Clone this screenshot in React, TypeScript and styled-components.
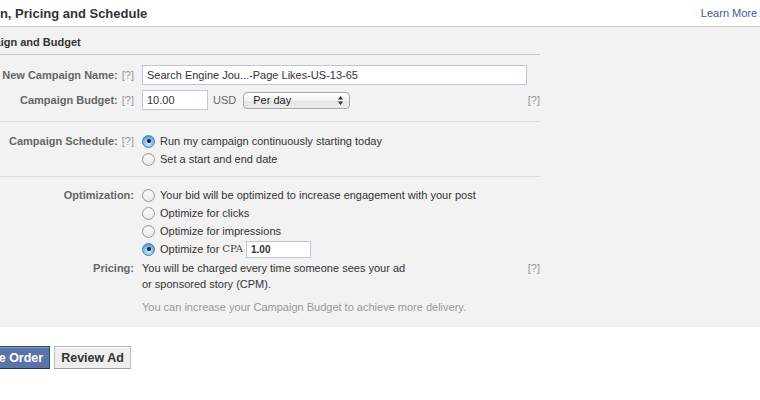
import React from "react";
import styled, { createGlobalStyle } from "styled-components";

const GlobalStyle = createGlobalStyle`
  html, body {
    margin: 0;
    padding: 0;
    background: #fff;
    overflow: hidden;
  }
  body {
    font-family: "Liberation Sans", Arial, sans-serif;
    font-size: 11px;
    color: #333;
  }
`;

const Viewport = styled.div`
  width: 760px;
  height: 400px;
  overflow: hidden;
`;

const Canvas = styled.div`
  margin-left: -55px;
  width: 880px;
`;

const Header = styled.div`
  display: flex;
  justify-content: space-between;
  align-items: center;
  height: 26px;
  border-bottom: 1px solid #ccc;
`;

const Title = styled.h2`
  margin: 0;
  font-size: 13px;
  font-weight: bold;
  color: #333;
`;

const HelpLink = styled.a`
  color: #3b5998;
  font-size: 11px;
  text-decoration: none;
  cursor: pointer;
`;

const Panel = styled.div`
  background: #f2f2f2;
  padding: 0 0 12px 19px;
`;

const Form = styled.div`
  width: 576px;
`;

const SectionTitle = styled.div`
  font-weight: bold;
  color: #333;
  line-height: 14px;
  padding: 8px 0 5px;
  border-bottom: 1px solid #ccc;
`;

const Section = styled.div<{ $pad: string; $last?: boolean }>`
  padding: ${(p) => p.$pad};
  border-bottom: ${(p) => (p.$last ? "none" : "1px solid #ddd")};
  display: flex;
  flex-direction: column;
  gap: 5px;
`;

const Row = styled.div<{ $line?: number; $top?: number }>`
  display: grid;
  grid-template-columns: 170px 1fr;
  column-gap: 8px;
  align-items: start;
  line-height: ${(p) => p.$line ?? 20}px;
  margin-top: ${(p) => p.$top ?? 0}px;
`;

const Label = styled.div`
  text-align: right;
  font-weight: bold;
  color: #666;
  white-space: nowrap;
`;

const Help = styled.span`
  color: #999;
  font-weight: normal;
  margin-left: 4px;
`;

const Field = styled.div`
  display: flex;
  align-items: center;
`;

const TextInput = styled.input<{ $width: number; $height?: number; $small?: boolean }>`
  box-sizing: border-box;
  width: ${(p) => p.$width}px;
  height: ${(p) => p.$height ?? 20}px;
  border: 1px solid #bdc7d8;
  background: #fff;
  padding: 0 4px;
  margin: 0;
  font-family: "Liberation Sans", Arial, sans-serif;
  font-size: ${(p) => (p.$small ? 10 : 11)}px;
  font-weight: ${(p) => (p.$small ? "bold" : "normal")};
  color: #333;
  outline: none;
`;

const Currency = styled.span`
  color: #666;
  margin: 0 7px 0 5px;
`;

const PopUp = styled.div`
  box-sizing: border-box;
  display: flex;
  align-items: center;
  justify-content: space-between;
  width: 107px;
  height: 17px;
  padding: 0 6px 0 9px;
  border: 1px solid #a5a5a5;
  border-radius: 4px;
  background: linear-gradient(#ffffff, #f1f1f1 50%, #e4e4e4 51%, #ececec);
  box-shadow: 0 1px 0 rgba(255, 255, 255, 0.7);
  line-height: 15px;
  color: #222;
`;

const RightHelp = styled.span`
  margin-left: auto;
  color: #999;
  align-self: flex-start;
`;

const RadioList = styled.div`
  display: flex;
  flex-direction: column;
`;

const Option = styled.label`
  display: flex;
  align-items: center;
  height: 18px;
  color: #333;
  white-space: nowrap;
`;

const RadioDot = styled.span<{ $checked?: boolean }>`
  box-sizing: border-box;
  position: relative;
  flex: none;
  width: 13px;
  height: 13px;
  margin-right: 5px;
  border-radius: 50%;
  border: 1px solid ${(p) => (p.$checked ? "#4f7db6" : "#9b9b9b")};
  background: ${(p) =>
    p.$checked
      ? "radial-gradient(circle at 50% 70%, #cbe6fb, #7fb8ea 55%, #4a8fd6)"
      : "linear-gradient(#fdfdfd, #e9e9e9)"};
  box-shadow: inset 0 1px 1px rgba(0, 0, 0, 0.08);

  &::after {
    content: "";
    display: ${(p) => (p.$checked ? "block" : "none")};
    position: absolute;
    left: 50%;
    top: 50%;
    width: 4px;
    height: 4px;
    margin: -2px 0 0 -2px;
    border-radius: 50%;
    background: #1b1b1b;
  }
`;

const Acronym = styled.span`
  font-family: "DejaVu Serif", "Liberation Serif", serif;
  font-size: 10px;
  color: #444;
  margin: 0 3px 0 3px;
`;

const PriceText = styled.div`
  color: #333;
  line-height: 16px;
`;

const Note = styled.div`
  color: #999;
  line-height: 16px;
`;

const ButtonBar = styled.div`
  display: flex;
  gap: 4px;
  margin: 19px 0 0 21px;
`;

const Button = styled.button<{ $primary?: boolean }>`
  box-sizing: border-box;
  height: 23px;
  padding: 0 6px;
  font-family: "Liberation Sans", Arial, sans-serif;
  font-size: 12.5px;
  font-weight: bold;
  cursor: pointer;
  color: ${(p) => (p.$primary ? "#fff" : "#333")};
  background: ${(p) => (p.$primary ? "#5b74a8" : "#eee")};
  border-width: 1px;
  border-style: solid;
  border-color: ${(p) => (p.$primary ? "#29447e #29447e #1a356e" : "#bbb #bbb #a0a0a0")};
  box-shadow: ${(p) =>
    p.$primary ? "inset 0 1px 0 #8a9cc2" : "inset 0 1px 0 #fff"};
`;

const Arrows: React.FC = () => (
  <svg width="5" height="9" viewBox="0 0 5 9">
    <path d="M2.5 0 L5 3.4 L0 3.4 Z" fill="#333" />
    <path d="M2.5 9 L5 5.6 L0 5.6 Z" fill="#333" />
  </svg>
);

export default function App() {
  return (
    <Viewport>
      <GlobalStyle />
      <Canvas>
        <Header>
          <Title>Campaign, Pricing and Schedule</Title>
          <HelpLink>Learn More About Pricing</HelpLink>
        </Header>
        <Panel>
          <Form>
            <SectionTitle>Campaign and Budget</SectionTitle>

            <Section $pad="10px 0 11px">
              <Row>
                <Label>
                  New Campaign Name:<Help>[?]</Help>
                </Label>
                <Field>
                  <TextInput
                    $width={385}
                    defaultValue="Search Engine Jou...-Page Likes-US-13-65"
                  />
                </Field>
              </Row>
              <Row>
                <Label>
                  Campaign Budget:<Help>[?]</Help>
                </Label>
                <Field>
                  <TextInput $width={66} defaultValue="10.00" />
                  <Currency>USD</Currency>
                  <PopUp>
                    <span>Per day</span>
                    <Arrows />
                  </PopUp>
                  <RightHelp>[?]</RightHelp>
                </Field>
              </Row>
            </Section>

            <Section $pad="10px 0 8px">
              <Row $line={18}>
                <Label>
                  Campaign Schedule:<Help>[?]</Help>
                </Label>
                <RadioList>
                  <Option>
                    <RadioDot $checked />
                    Run my campaign continuously starting today
                  </Option>
                  <Option>
                    <RadioDot />
                    Set a start and end date
                  </Option>
                </RadioList>
              </Row>
            </Section>

            <Section $pad="9px 0 0" $last>
              <Row $line={18}>
                <Label>Optimization:</Label>
                <RadioList>
                  <Option>
                    <RadioDot />
                    Your bid will be optimized to increase engagement with your post
                  </Option>
                  <Option>
                    <RadioDot />
                    Optimize for clicks
                  </Option>
                  <Option>
                    <RadioDot />
                    Optimize for impressions
                  </Option>
                  <Option>
                    <RadioDot $checked />
                    Optimize for<Acronym>CPA</Acronym>
                    <TextInput $width={65} $height={17} $small defaultValue="1.00" />
                  </Option>
                </RadioList>
              </Row>
              <Row $line={16} $top={-3}>
                <Label>Pricing:</Label>
                <Field>
                  <PriceText>
                    You will be charged every time someone sees your ad
                    <br />
                    or sponsored story (CPM).
                  </PriceText>
                  <RightHelp>[?]</RightHelp>
                </Field>
              </Row>
              <Row $line={16} $top={2}>
                <span />
                <Note>You can increase your Campaign Budget to achieve more delivery.</Note>
              </Row>
            </Section>
          </Form>
        </Panel>
        <ButtonBar>
          <Button $primary>Place Order</Button>
          <Button>Review Ad</Button>
        </ButtonBar>
      </Canvas>
    </Viewport>
  );
}
